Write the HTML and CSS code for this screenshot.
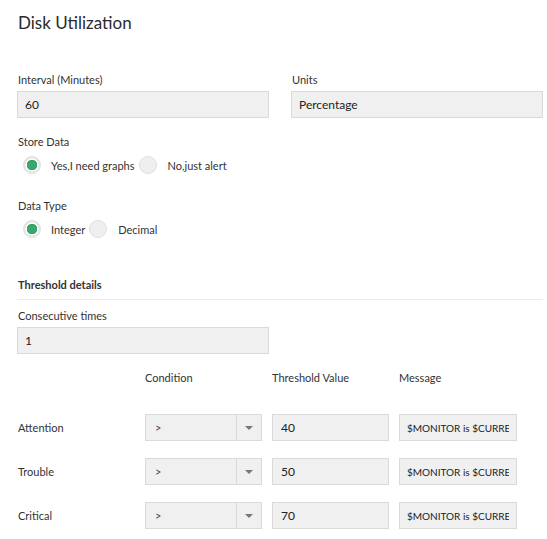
FILE: index.html
```html
<!DOCTYPE html>
<html lang="en">

<head>
    <title>Disk Utilization</title>
    <meta charset="UTF-8">
    <meta name="viewport" content="width=device-width, initial-scale=1.0">
    <link rel="stylesheet" href="styles.css">
</head>

<body>
    <div class="page">
        <h1 class="title">Disk Utilization</h1>

        <div class="two-col">
            <div class="field">
                <label for="interval">Interval (Minutes)</label>
                <input type="text" id="interval" class="text-input" value="60">
            </div>
            <div class="field">
                <label for="units">Units</label>
                <input type="text" id="units" class="text-input" value="Percentage">
            </div>
        </div>

        <div class="group">
            <div class="group-label">Store Data</div>
            <div class="radio-row">
                <span class="radio checked"></span><span class="radio-text">Yes,I need graphs</span>
                <span class="radio"></span><span class="radio-text">No,just alert</span>
            </div>
        </div>

        <div class="group">
            <div class="group-label">Data Type</div>
            <div class="radio-row">
                <span class="radio checked"></span><span class="radio-text">Integer</span>
                <span class="radio"></span><span class="radio-text">Decimal</span>
            </div>
        </div>

        <div class="section-head">Threshold details</div>

        <div class="field consecutive">
            <label for="consecutive">Consecutive times</label>
            <input type="text" id="consecutive" class="text-input" value="1">
        </div>

        <div class="threshold-grid">
            <div></div>
            <div class="col-head">Condition</div>
            <div class="col-head">Threshold Value</div>
            <div class="col-head">Message</div>

            <div class="row-label">Attention</div>
            <div class="select"><span class="select-value">&gt;</span><span class="select-arrow"></span></div>
            <input type="text" class="text-input" value="40">
            <input type="text" class="text-input msg" value="$MONITOR is $CURRENT_VALUE $UNITS">

            <div class="row-label">Trouble</div>
            <div class="select"><span class="select-value">&gt;</span><span class="select-arrow"></span></div>
            <input type="text" class="text-input" value="50">
            <input type="text" class="text-input msg" value="$MONITOR is $CURRENT_VALUE $UNITS">

            <div class="row-label">Critical</div>
            <div class="select"><span class="select-value">&gt;</span><span class="select-arrow"></span></div>
            <input type="text" class="text-input" value="70">
            <input type="text" class="text-input msg" value="$MONITOR is $CURRENT_VALUE $UNITS">
        </div>
    </div>
</body>

</html>
```

FILE: styles.css
```css
body {
    margin: 0;
    background: #fff;
    font-family: Lato, "Open Sans", sans-serif;
    color: #333;
}

.page {
    padding: 11px 4px 0 17px;
}

.title {
    margin: 0;
    font-size: 17px;
    font-weight: 400;
    line-height: 24px;
    color: #2b2b2b;
    padding-left: 1px;
}

.two-col {
    display: flex;
    gap: 22px;
    margin-top: 37px;
}

.field {
    display: flex;
    flex-direction: column;
    width: 252px;
}

.field label,
.group-label {
    font-size: 11px;
    line-height: 16px;
    margin-bottom: 3px;
    padding-left: 1px;
}

.text-input {
    box-sizing: border-box;
    height: 27px;
    width: 100%;
    margin: 0;
    padding: 0 7px;
    border: 1px solid #dadada;
    background: #f0f0f0;
    font-family: Lato, "Open Sans", sans-serif;
    font-size: 12px;
    color: #222;
    outline: none;
}

.group {
    margin-top: 16px;
    padding-bottom: 1px;
}

.group + .group {
    margin-top: 22px;
}

.group-label {
    margin-bottom: 5px;
}

.radio-row {
    display: flex;
    align-items: center;
    height: 20px;
    font-size: 11px;
}

.radio {
    box-sizing: border-box;
    width: 18px;
    height: 18px;
    border-radius: 50%;
    border: 1px solid #e0e0e0;
    background: #efefef;
    margin-left: 6px;
    margin-right: 10px;
}

.radio-text + .radio {
    margin-left: 4px;
    margin-right: 11px;
}

.radio.checked {
    background: radial-gradient(circle, #39a66b 0 5px, #fff 5.5px 6.3px, #e6e6e6 6.8px);
}

.section-head {
    margin-top: 37px;
    font-size: 11px;
    font-weight: 700;
    line-height: 16px;
    padding-bottom: 6px;
    border-bottom: 1px solid #ececec;
    padding-left: 1px;
}

.consecutive {
    margin-top: 8px;
}

.threshold-grid {
    display: grid;
    grid-template-columns: 118px 117px 117px 118px;
    column-gap: 10px;
    row-gap: 17px;
    margin-top: 16px;
    align-items: center;
    font-size: 11px;
}

.col-head {
    line-height: 16px;
    margin-bottom: 11px;
}

.row-label {
    padding-left: 1px;
}

.threshold-grid .text-input {
    padding-left: 8px;
}

.threshold-grid .msg {
    font-size: 10px;
    padding-left: 7px;
}

.select {
    box-sizing: border-box;
    display: flex;
    height: 27px;
    border: 1px solid #dadada;
    background: #f0f0f0;
}

.select-value {
    flex: 1;
    padding-left: 9px;
    line-height: 25px;
    font-size: 11px;
    color: #444;
}

.select-arrow {
    width: 24px;
    border-left: 1px solid #dadada;
    display: flex;
    align-items: center;
    justify-content: center;
}

.select-arrow::after {
    content: "";
    border-left: 4px solid transparent;
    border-right: 4px solid transparent;
    border-top: 4px solid #777;
}
```
